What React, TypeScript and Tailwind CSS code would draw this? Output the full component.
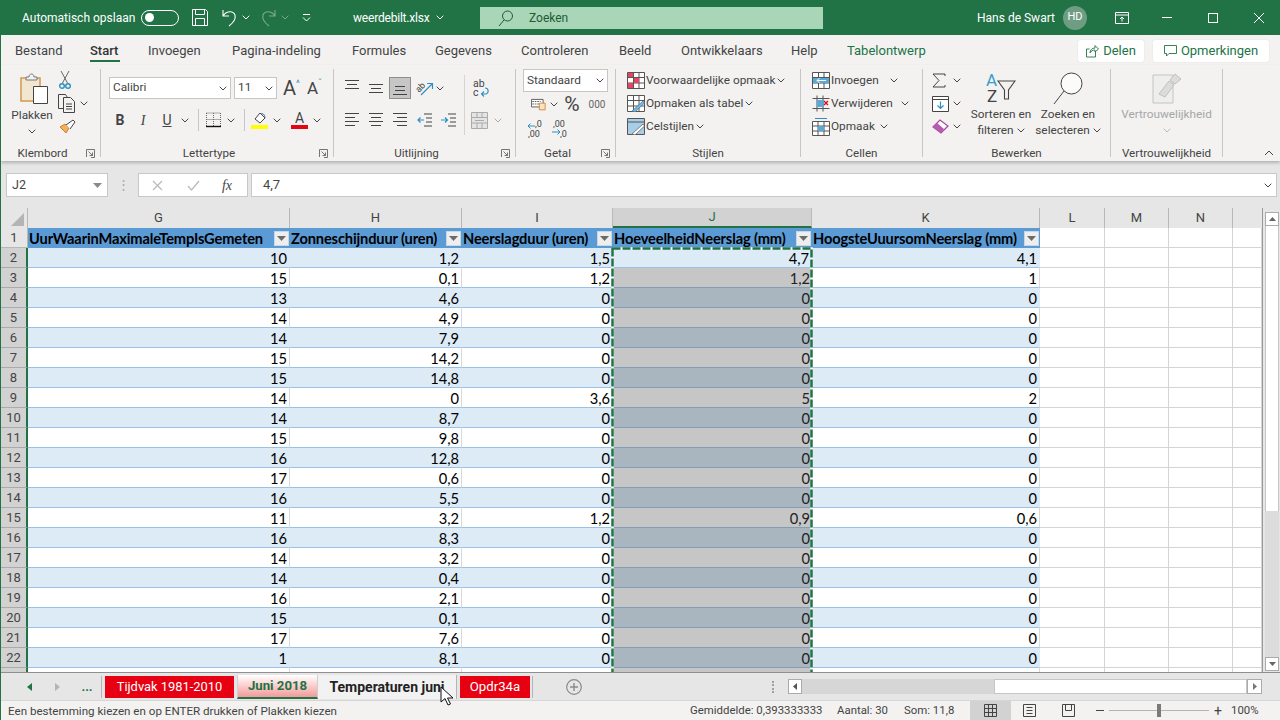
import React from "react";

const Chev = ({ c = "#444", className = "" }: { c?: string; className?: string }) => (
  <svg width="8" height="5" viewBox="0 0 8 5" className={"shrink-0 " + className}><path d="M.7.7 4 4 7.3.7" fill="none" stroke={c} strokeWidth="1" /></svg>
);
const Launcher = () => (
  <svg width="9" height="9" viewBox="0 0 9 9" className="shrink-0"><path d="M.5 8V.5h8V8.5H5M2.5 2.5l4 4M3.5 6.5h3v-3" fill="none" stroke="#666" strokeWidth=".9" /></svg>
);
const Lines = ({ kind }: { kind: string }) => {
  const map: Record<string, string> = {
    top: "M1 1.500h14M3 5.500h10M1 9.500h14",
    mid: "M1 5.500h14M3 9.500h10M1 13.500h14",
    bot: "M3 7.500h10M3 11.500h10M1 15.500h14",
    left: "M1 2.500h14M1 6.500h10M1 10.500h14M1 14.500h10",
    center: "M1 2.500h14M3 6.500h10M1 10.500h14M3 14.500h10",
    right: "M1 2.500h14M5 6.500h10M1 10.500h14M5 14.500h10",
  };
  return <svg width="16" height="18" viewBox="0 0 16 18"><path d={map[kind]} stroke="#444" strokeWidth="1.1" fill="none" /></svg>;
};
const Indent = ({ flip }: { flip?: boolean }) => (
  <svg width="16" height="16" viewBox="0 0 16 16"><path d="M7 2h8M9 6h6M9 10h6M7 14h8" stroke="#444" fill="none" />{flip ? <path d="M0 8h6M4 5.500 6.500 8 4 10.500" stroke="#2e8fc0" strokeWidth="1.2" fill="none" /> : <path d="M1 8h6M3.500 5.500 1 8l2.500 2.500" stroke="#2e8fc0" strokeWidth="1.2" fill="none" />}</svg>
);
const TableIcon = ({ children }: { children?: React.ReactNode }) => (
  <svg width="18" height="17" viewBox="0 0 18 17" className="shrink-0"><path d="M.5.500h17v16H.5zM6.500.5v16M12 .5v16M.5 5.500h17M.5 11h17" fill="#fff" stroke="#555" strokeWidth="1" />{children}</svg>
);

const Group = ({ w, label, launch, sep = true, children }: { w: string; label: string; launch?: boolean; sep?: boolean; children: React.ReactNode }) => (
  <>
    <div className={"flex flex-col shrink-0 h-[92px] " + w}>
      <div className="h-[76px] flex">{children}</div>
      <div className="h-[16px] flex items-center text-[11.600px] text-[#444]">
        <div className="flex-1 text-center whitespace-nowrap pt-[2px]">{label}</div>
        {launch && <div className="w-[16px] flex justify-start pl-[2px] pt-[1px]"><Launcher /></div>}
      </div>
    </div>
    {sep && <div className="w-px h-[88px] bg-[#c8c6c4] shrink-0" />}
  </>
);

const Box = ({ w, children }: { w: string; children?: React.ReactNode }) => (
  <div className={"flex items-center justify-center shrink-0 h-full " + w}>{children}</div>
);

const colsClass = "grid grid-cols-[27px_262px_172px_151px_199px_228px_65px_64px_64px_29px]";

const G = [10, 15, 13, 14, 14, 15, 15, 14, 14, 15, 16, 17, 16, 11, 16, 14, 14, 16, 15, 17, 1];
const H = ["1,2", "0,1", "4,6", "4,9", "7,9", "14,2", "14,8", "0", "8,7", "9,8", "12,8", "0,6", "5,5", "3,2", "8,3", "3,2", "0,4", "2,1", "0,1", "7,6", "8,1"];
const I: Record<number, string> = { 0: "1,5", 1: "1,2", 7: "3,6", 13: "1,2" };
const J: Record<number, string> = { 0: "4,7", 1: "1,2", 7: "5", 13: "0,9" };
const K: Record<number, string> = { 0: "4,1", 1: "1", 7: "2", 13: "0,6" };

const Filter = () => (
  <div className="w-[15px] h-[15px] bg-[#eeeeee] border border-[#c9d6e4] flex items-center justify-center shrink-0">
    <svg width="9" height="5" viewBox="0 0 9 5"><path d="M0 0h9L4.500 5z" fill="#6b6b6b" /></svg>
  </div>
);

const HeadCell = ({ t }: { t: string }) => (
  <div className="bg-[#5b9bd5] h-[20px] flex items-center justify-between pl-[1px] pr-[1px] text-[14.67px] font-bold text-black overflow-hidden whitespace-nowrap tracking-[-0.15px]">
    <span className="pt-[1px]">{t}</span><Filter />
  </div>
);

const Cell = ({ t, blue }: { t?: string | number; blue: boolean }) => (
  <div className={"h-[20px] flex items-center justify-end pr-[2px] pt-[2px] text-[14.67px] text-black border-b border-[#9bc2e6] border-r " + (blue ? "bg-[#ddebf7] border-r-[#ddebf7]" : "bg-white border-r-[#d9d9d9]")}>{t}</div>
);
const Empty = () => <div className="h-[20px] bg-white border-b border-r border-[#d4d4d4]" />;

const ColHead = ({ t, sel }: { t: string; sel?: boolean }) => (
  <div className={"h-[20px] flex items-center justify-center text-[13px] text-[#444] border-r border-[#b8b8b8] " + (sel ? "bg-[#d2d2d2] border-b-2 border-b-[#217346] text-[#217346]" : "bg-[#e6e6e6]")}>{t}</div>
);

export default function App() {
  return (
    <div className="w-[1280px] h-[720px] flex flex-col overflow-hidden border-l border-[#217346] bg-[#e6e6e6] relative font-['Roboto',sans-serif] text-[#444]">
      {/* Title bar */}
      <div className="h-[35px] bg-[#217346] flex items-center text-white text-[12px] shrink-0 whitespace-nowrap">
        <span className="ml-[21px] w-[119px] pt-[1px]">Automatisch opslaan</span>
        <div className="w-[38px] h-[16px] rounded-full border border-white flex items-center pl-[3px]"><div className="w-[9px] h-[9px] rounded-full bg-white" /></div>
        <div className="ml-[13px] w-[16px] h-[17px]">
          <svg width="16" height="17" viewBox="0 0 16 17"><path d="M.5.500h13l2 2v14H.5zM3.500.5v5h9v-5M3.500 16.500v-7h9v7" fill="none" stroke="#fff" /></svg>
        </div>
        <div className="ml-[14px] w-[15px]">
          <svg width="15" height="20" viewBox="0 0 15 20"><path d="M1 2v6h6M1 8c3-5 10-6 12-1 1 4-2 8-6 11" fill="none" stroke="#fff" strokeWidth="1.1" /></svg>
        </div>
        <Chev c="#fff" className="ml-[5px]" />
        <div className="ml-[11px] w-[15px] opacity-40">
          <svg width="15" height="20" viewBox="0 0 15 20"><path d="M14 2v6H8M14 8C11 3 4 2 2 7c-1 4 2 8 6 11" fill="none" stroke="#fff" strokeWidth="1.1" /></svg>
        </div>
        <Chev c="#fff" className="ml-[5px] opacity-40" />
        <div className="ml-[13px] w-[9px]">
          <svg width="9" height="9" viewBox="0 0 9 9"><path d="M1 1.500h7M1 4.500 4.500 8 8 4.500" fill="none" stroke="#fff" /></svg>
        </div>
        <span className="ml-[42px] w-[79px] pt-[1px] tracking-[-0.2px]">weerdebilt.xlsx</span>
        <Chev c="#fff" className="ml-[4px]" />
        <div className="ml-[36px] w-[343px] h-[22px] bg-[#a9d6b7] flex items-center text-[#1f5c36]">
          <svg width="18" height="18" viewBox="0 0 18 18" className="ml-[17px]"><circle cx="10.500" cy="7" r="5" fill="none" stroke="#1f5c36" /><path d="M7 11 2 17" stroke="#1f5c36" /></svg>
          <span className="ml-[14px] pt-[1px]">Zoeken</span>
        </div>
        <span className="ml-[154px] w-[74px] pt-[1px]">Hans de Swart</span>
        <div className="ml-[12px] w-[24px] h-[24px] rounded-full bg-[#6f9d84] flex items-center justify-center text-[11px]">HD</div>
        <svg width="14" height="12" viewBox="0 0 14 12" className="ml-[28px]"><path d="M.5.500h13v11H.5zM.5 3h13M7 9.500V5M5 7l2-2 2 2" fill="none" stroke="#fff" /></svg>
        <div className="ml-[33px] w-[10px] h-px bg-white" />
        <div className="ml-[36px] w-[10px] h-[10px] border border-white" />
        <svg width="10" height="10" viewBox="0 0 10 10" className="ml-[36px]"><path d="M0 0l10 10M10 0 0 10" stroke="#fff" /></svg>
      </div>

      {/* Tabs */}
      <div className="h-[30px] pt-[1px] bg-[#f3f2f1] flex items-center shrink-0 text-[13px] text-[#444] whitespace-nowrap">
        <div className="ml-[14px] w-[75px]">Bestand</div>
        <div className="w-[58px] h-full flex items-center relative font-medium text-[#333]">Start<div className="absolute left-0 top-[24px] w-[30px] h-[2px] bg-[#217346]" /></div>
        <div className="w-[84px]">Invoegen</div>
        <div className="w-[120px]">Pagina-indeling</div>
        <div className="w-[83px]">Formules</div>
        <div className="w-[86px]">Gegevens</div>
        <div className="w-[98px]">Controleren</div>
        <div className="w-[62px]">Beeld</div>
        <div className="w-[110px]">Ontwikkelaars</div>
        <div className="w-[56px]">Help</div>
        <div className="w-[231px] text-[#217346]">Tabelontwerp</div>
        <div className="w-[66px] h-[22px] bg-white rounded-[2px] shadow-[0_0_1px_rgba(0,0,0,.2)] flex items-center justify-center gap-[4px] text-[#217346]">
          <svg width="13" height="14" viewBox="0 0 13 14"><path d="M9.500 7v6H.5V5h3M4 9c0-3 2-5 5-5V1.500L12.500 5 9 8V6C7 6 5 7 4 9z" fill="none" stroke="#217346" strokeWidth=".9" /></svg>Delen
        </div>
        <div className="ml-[9px] w-[116px] h-[22px] bg-white rounded-[2px] shadow-[0_0_1px_rgba(0,0,0,.2)] flex items-center justify-center gap-[4px] text-[#217346]">
          <svg width="13" height="12" viewBox="0 0 13 12"><path d="M.5.500h12v8H5L2.500 11V8.500h-2z" fill="none" stroke="#217346" strokeWidth=".9" /></svg>Opmerkingen
        </div>
      </div>

      {/* Ribbon */}
      <div className="h-[96px] pt-[4px] bg-[#f3f2f1] flex shrink-0 relative z-10 shadow-[0_2px_3px_rgba(0,0,0,.22)] text-[11.800px] text-[#444] whitespace-nowrap">
        <Group w="w-[99px]" label="Klembord" launch>
          <div className="w-[57px] pl-[5px] flex flex-col items-center">
            <svg width="30" height="31" viewBox="0 0 30 31" className="mt-[4px] ml-[5px]">
              <path d="M1 5h19v23H1z" fill="#f3e6d0" stroke="#cf9a4e" strokeWidth="1.500" />
              <path d="M6 7V4h3c0-4 5-4 5 0h3v3z" fill="#f3f2f1" stroke="#777" />
              <path d="M13.500 13.500h14v17h-14z" fill="#fff" stroke="#444" />
            </svg>
            <div className="mt-[3px] h-[17px] leading-[17px]">Plakken</div>
            <Chev className="mt-[5px]" />
          </div>
          <div className="flex flex-col">
            <div className="h-[23px] flex items-center pl-[1px]">
              <svg width="12" height="19" viewBox="0 0 12 19"><path d="M2 0l6.500 12M10 0 3.500 12" stroke="#666" fill="none" /><circle cx="3" cy="15" r="2.300" fill="none" stroke="#2e8fc0" strokeWidth="1.400" /><circle cx="9" cy="15" r="2.300" fill="none" stroke="#2e8fc0" strokeWidth="1.400" /></svg>
            </div>
            <div className="h-[23px] flex items-center gap-[4px]">
              <svg width="18" height="19" viewBox="0 0 18 19"><path d="M6 14.500H.5V.5h7l2 3" fill="none" stroke="#444" /><path d="M5.500 3.500h7l4 4v11h-11zM8 10h6M8 12.500h6M8 15h6" fill="#f3f2f1" stroke="#444" /></svg>
              <Chev />
            </div>
            <div className="h-[23px] flex items-center pl-[1px]">
              <svg width="17" height="15" viewBox="0 0 17 15"><path d="M1 8l6 6 3-5-4-4z" fill="#f0b060" stroke="#d1812c" /><path d="M7 6l7-5 2 2-5 7" fill="#fff" stroke="#444" /></svg>
            </div>
          </div>
        </Group>

        <Group w="w-[232px]" label="Lettertype" launch>
          <div className="pl-[8px] pt-[8px] flex flex-col gap-[10px]">
            <div className="h-[22px] flex items-center">
              <div className="w-[122px] h-[22px] bg-white border border-[#c8c6c4] flex items-center justify-between pl-[3px] pr-[3px]">Calibri<Chev /></div>
              <div className="ml-[3px] w-[43px] h-[22px] bg-white border border-[#c8c6c4] flex items-center justify-between pl-[3px] pr-[3px]">11<Chev /></div>
              <div className="ml-[6px] w-[24px] flex items-start"><span className="text-[20px] leading-[22px] text-[#444]">A</span><span className="text-[9px] leading-[12px] text-[#2e8fc0]">^</span></div>
              <div className="ml-[0px] w-[22px] flex items-start"><span className="text-[17px] leading-[22px] text-[#444]">A</span><span className="text-[9px] leading-[12px] text-[#2e8fc0]">ˇ</span></div>
            </div>
            <div className="h-[22px] flex items-center">
              <Box w="w-[22px]"><span className="font-bold text-[14px]">B</span></Box>
              <Box w="w-[24px]"><span className="italic text-[14px] font-['Liberation_Serif',serif]">I</span></Box>
              <Box w="w-[24px]"><span className="underline text-[14px]">U</span></Box>
              <Box w="w-[12px]"><Chev /></Box>
              <Box w="w-[14px]"><div className="w-px h-[22px] bg-[#c8c6c4]" /></Box>
              <Box w="w-[16px]"><svg width="15" height="16" viewBox="0 0 15 16"><path d="M.5 1h14M.5 1v13M14.500 1v13M7.500 1v13M.5 7.500h14" fill="none" stroke="#666" strokeDasharray="1 1" /><path d="M0 14.500h15" stroke="#111" strokeWidth="1.400" /></svg></Box>
              <Box w="w-[20px]"><Chev /></Box>
              <Box w="w-[6px]"><div className="w-px h-[22px] bg-[#c8c6c4]" /></Box>
              <Box w="w-[24px]"><svg width="17" height="18" viewBox="0 0 17 18"><path d="M4 8l5-6 5 5-5 5z" fill="#fff" stroke="#444" /><path d="M10 3c3-1 4 2 4 4" fill="none" stroke="#2e6fa0" /><path d="M0 14h17v4H0z" fill="#ffff00" /></svg></Box>
              <Box w="w-[12px]"><Chev /></Box>
              <Box w="w-[32px]"><svg width="17" height="18" viewBox="0 0 17 18"><text x="8.500" y="12" fontSize="14" textAnchor="middle" fill="#444" fontFamily="Roboto">A</text><path d="M0 14h17v4H0z" fill="#e30613" /></svg></Box>
              <Box w="w-[4px]"><Chev /></Box>
            </div>
          </div>
        </Group>

        <Group w="w-[181px]" label="Uitlijning" launch>
          <div className="pl-[6px] pt-[8px] w-[130px] flex flex-col gap-[10px]">
            <div className="h-[22px] flex items-center">
              <Box w="w-[24px]"><Lines kind="top" /></Box>
              <Box w="w-[24px]"><Lines kind="mid" /></Box>
              <Box w="w-[24px]"><div className="w-[22px] h-[22px] bg-[#c6c6c6] border border-[#8f8f8f] flex items-center justify-center"><Lines kind="bot" /></div></Box>
              <Box w="w-[26px]"><svg width="18" height="18" viewBox="0 0 18 18"><text x="0" y="11" fontSize="9" fill="#444" transform="rotate(-45 5 9)" fontFamily="Roboto">ab</text><path d="M5 16 16 5M11 4.500h5.500V10" fill="none" stroke="#2e8fc0" strokeWidth="1.200" /></svg></Box>
              <Box w="w-[4px]"><Chev /></Box>
            </div>
            <div className="h-[22px] flex items-center">
              <Box w="w-[24px]"><Lines kind="left" /></Box>
              <Box w="w-[24px]"><Lines kind="center" /></Box>
              <Box w="w-[24px]"><Lines kind="right" /></Box>
              <Box w="w-[26px]"><Indent /></Box>
              <Box w="w-[22px]"><Indent flip /></Box>
            </div>
          </div>
          <div className="w-px h-[60px] mt-[6px] bg-[#d6d4d2]" />
          <div className="pt-[8px] flex flex-col gap-[10px]">
            <div className="h-[22px] flex items-center pl-[6px]">
              <svg width="18" height="22" viewBox="0 0 18 22"><text x="2" y="10" fontSize="10.500" fill="#444" fontFamily="Roboto">ab</text><text x="2" y="19" fontSize="10.500" fill="#444" fontFamily="Roboto">c</text><path d="M11 17h4c3-1 3-6-1-6M13 14.500 10.500 17l2.500 2.500" fill="none" stroke="#2e8fc0" strokeWidth="1.100" /></svg>
            </div>
            <div className="h-[22px] flex items-center gap-[6px] pl-[6px]">
              <svg width="17" height="17" viewBox="0 0 17 17"><path d="M.5.500h16v16H.5zM.5 5.500h16M.5 11h16M6 .5v5M11 .5v5M6 11v5.500M11 11v5.500M4 8.500h9" fill="#e4e4e4" stroke="#aaa" /></svg>
              <Chev c="#aaa" />
            </div>
          </div>
        </Group>

        <Group w="w-[99px]" label="Getal" launch>
          <div className="pl-[7px] flex flex-col">
            <div className="w-[85px] h-[23px] bg-white border border-[#c8c6c4] flex items-center justify-between pl-[3px] pr-[3px]">Standaard<Chev /></div>
            <div className="h-[24px] flex items-center">
              <Box w="w-[23px]">
                <svg width="18" height="16" viewBox="0 0 18 16" className="ml-[8px]"><path d="M.5 2.500h14v9H.5z" fill="#fff" stroke="#444" /><path d="M1.500 5h10M1.500 8h10" stroke="#444" strokeDasharray="2 1" /><path d="M10 7h7v8h-7z" fill="#f9e3c0" stroke="#d1812c" /></svg>
              </Box>
              <Box w="w-[15px]"><Chev /></Box>
              <Box w="w-[22px]"><span className="text-[21px] leading-[20px]">%</span></Box>
              <Box w="w-[28px]"><span className="text-[10px] text-[#666]">000</span></Box>
            </div>
            <div className="h-[23px] flex items-center">
              <Box w="w-[25px]"><svg width="18" height="20" viewBox="0 0 18 20"><text x="8" y="9" fontSize="9" fill="#444" fontFamily="Roboto">,0</text><text x="1" y="18.500" fontSize="9" fill="#444" fontFamily="Roboto">,00</text><path d="M1 8h7M3.500 5.500 1 8l2.500 2.500" fill="none" stroke="#2e8fc0" /></svg></Box>
              <Box w="w-[24px]"><svg width="18" height="20" viewBox="0 0 18 20"><text x="2" y="9" fontSize="9" fill="#444" fontFamily="Roboto">,00</text><text x="9" y="18.500" fontSize="9" fill="#444" fontFamily="Roboto">,0</text><path d="M1 14h8M6.500 11.500 9 14l-2.500 2.500" fill="none" stroke="#2e8fc0" /></svg></Box>
            </div>
          </div>
        </Group>

        <Group w="w-[184px]" label="Stijlen">
          <div className="pl-[11px] flex flex-col">
            <div className="h-[23px] flex items-center">
              <TableIcon><path d="M1 1h5v4H1zM7 6h5v5H7zM1 11h5v5H1z" fill="#e8445f" /></TableIcon>
              <span className="ml-[1px]">Voorwaardelijke opmaak</span><Chev className="ml-[2px]" />
            </div>
            <div className="h-[23px] flex items-center">
              <TableIcon><path d="M5 16 16 6l1.500 2L8 17z" fill="#7fb5d8" stroke="#3a7ca8" strokeWidth=".7" /></TableIcon>
              <span className="ml-[1px]">Opmaken als tabel</span><Chev className="ml-[2px]" />
            </div>
            <div className="h-[23px] flex items-center">
              <svg width="18" height="17" viewBox="0 0 18 17" className="shrink-0"><path d="M.5.500h17v16H.5z" fill="#a8cde6" stroke="#555" /><path d="M.5 4h17" stroke="#555" /><path d="M5 16 16 6l1.500 2L8 17z" fill="#fff" stroke="#555" strokeWidth=".7" /></svg>
              <span className="ml-[1px]">Celstijlen</span><Chev className="ml-[2px]" />
            </div>
          </div>
        </Group>

        <Group w="w-[121px]" label="Cellen">
          <div className="pl-[11px] flex flex-col">
            <div className="h-[23px] flex items-center">
              <TableIcon><path d="M1 6h16v5H1z" fill="#5aa9d6" /><path d="M14 8.500H5M7.500 6 5 8.500 7.500 11" stroke="#fff" fill="none" /></TableIcon>
              <span className="ml-[1px] w-[51px]">Invoegen</span><Chev className="ml-[8px]" />
            </div>
            <div className="h-[23px] flex items-center">
              <svg width="18" height="17" viewBox="0 0 18 17" className="shrink-0"><path d="M.5 3.500h17M.5 13.500h17M5 .5v16M11 .5v16" fill="none" stroke="#555" /><path d="M5 5h7v7H5z" fill="#5aa9d6" /><path d="M12 6l4 4M16 6l-4 4" stroke="#e30613" strokeWidth="1.300" /></svg>
              <span className="ml-[1px] w-[62px]">Verwijderen</span><Chev className="ml-[8px]" />
            </div>
            <div className="h-[23px] flex items-center">
              <svg width="18" height="19" viewBox="0 0 18 19" className="shrink-0"><path d="M.5 4.500h17v14H.5zM.5 9h17M.5 14h17M6 4.500v14M12 4.500v14" fill="#fff" stroke="#555" /><path d="M6 9h6v5H6z" fill="#5aa9d6" /><path d="M3 1.500h12" stroke="#2e8fc0" /></svg>
              <span className="ml-[1px]">Opmaak</span><Chev className="ml-[5px]" />
            </div>
          </div>
        </Group>

        <Group w="w-[187px]" label="Bewerken">
          <div className="w-[47px] pl-[9px] flex flex-col">
            <div className="h-[23px] flex items-center gap-[6px]">
              <svg width="14" height="15" viewBox="0 0 14 15"><path d="M13 3V1H1l6 6.500L1 14h12v-2" fill="none" stroke="#444" /></svg>
              <Chev c="#444" className="ml-[1px]" />
            </div>
            <div className="h-[23px] flex items-center gap-[4px]">
              <svg width="17" height="16" viewBox="0 0 17 16"><path d="M.5.500h16v15H.5zM.5 3.500h16" fill="#fff" stroke="#444" /><path d="M8.500 5.500v7M5.500 9.500l3 3 3-3" fill="none" stroke="#2e8fc0" strokeWidth="1.200" /></svg>
              <Chev />
            </div>
            <div className="h-[23px] flex items-center gap-[4px]">
              <svg width="17" height="15" viewBox="0 0 17 15"><path d="M1 8l7-7 8 6-7 7z" fill="#fff" stroke="#a6459c" strokeWidth="1.200" /><path d="M1 8l4-4 7 6-3 4z" fill="#b85bb0" /></svg>
              <Chev />
            </div>
          </div>
          <div className="w-[62px] pt-[3px] flex flex-col items-center">
            <div className="h-[34px] flex items-start">
              <svg width="30" height="32" viewBox="0 0 30 32"><text x="0" y="14" fontSize="17" fill="#3a9dc9" fontFamily="Roboto">A</text><text x="1" y="30" fontSize="17" fill="#444" fontFamily="Roboto">Z</text><path d="M12 9h17l-6.500 9v9h-4v-9z" fill="none" stroke="#444" strokeWidth="1.100" /></svg>
            </div>
            <div className="h-[16px] leading-[16px]">Sorteren en</div>
            <div className="h-[16px] leading-[16px] flex items-center gap-[3px]">filteren<Chev /></div>
          </div>
          <div className="w-[72px] pt-[3px] flex flex-col items-center">
            <div className="h-[34px] flex items-start">
              <svg width="30" height="34" viewBox="0 0 30 34"><circle cx="18.500" cy="11.500" r="10.500" fill="#fbfbfa" stroke="#444" /><path d="M11 19 1 32" stroke="#444" /></svg>
            </div>
            <div className="h-[16px] leading-[16px]">Zoeken en</div>
            <div className="h-[16px] leading-[16px] flex items-center gap-[3px]">selecteren<Chev /></div>
          </div>
        </Group>

        <Group w="w-[111px]" label="Vertrouwelijkheid">
          <div className="w-full pt-[3px] flex flex-col items-center">
            <div className="h-[34px] flex items-start">
              <svg width="30" height="32" viewBox="0 0 30 32"><path d="M1 3h20v28H1z" fill="#eeeeed" stroke="#c4c4c4" /><path d="M7 22 17 9l5 4-9 12zM18 8l5-6 6 5-6 5z" fill="#dcdcdc" stroke="#c0c0c0" /></svg>
            </div>
            <div className="h-[16px] leading-[16px] text-[#a6a6a6]">Vertrouwelijkheid</div>
            <div className="h-[16px] flex items-center"><Chev c="#bbb" /></div>
          </div>
        </Group>

        <div className="flex-1 h-[92px] flex items-end justify-end pr-[6px] pb-[5px]">
          <svg width="10" height="6" viewBox="0 0 10 6"><path d="M1 5l4-4 4 4" fill="none" stroke="#444" /></svg>
        </div>
      </div>

      {/* Formula bar */}
      <div className="h-[47px] pt-[12px] flex shrink-0 bg-[#e6e6e6]">
        <div className="ml-[5px] w-[102px] h-[24px] bg-white border border-[#c8c8c8] flex items-center justify-between pl-[5px] pr-[5px] text-[12.5px]">J2
          <svg width="9" height="5" viewBox="0 0 9 5"><path d="M0 0h9L4.500 5z" fill="#8a8a8a" /></svg>
        </div>
        <div className="w-[30px] h-[24px] flex items-center justify-center text-[#a8a8a8] text-[13px]">⋮</div>
        <div className="w-[110px] h-[24px] bg-white border border-[#c8c8c8] flex items-center">
          <Box w="w-[36px]"><svg width="11" height="11" viewBox="0 0 11 11"><path d="M1 1l9 9M10 1l-9 9" stroke="#bbb" strokeWidth="1.300" /></svg></Box>
          <Box w="w-[36px]"><svg width="13" height="11" viewBox="0 0 13 11"><path d="M1 6l3.500 4L12 1" fill="none" stroke="#bbb" strokeWidth="1.300" /></svg></Box>
          <Box w="w-[32px]"><span className="italic text-[14px] font-['Liberation_Serif',serif] text-[#444]">fx</span></Box>
        </div>
        <div className="ml-[3px] w-[1026px] h-[24px] bg-white border border-[#c8c8c8] flex items-center justify-between pl-[11px] pr-[4px] text-[13px]">4,7<Chev /></div>
      </div>

      {/* Sheet */}
      <div className="h-[464px] flex shrink-0">
        <div className="w-[1262px] h-[464px] relative overflow-hidden border-r border-[#9a9a9a] bg-white font-['Lato',sans-serif]">
          <div className={colsClass + " font-['Roboto',sans-serif]"}>
            <div className="h-[20px] bg-[#e6e6e6] border-r border-[#b8b8b8] flex items-end justify-end pr-[3px] pb-[2px]">
              <svg width="13" height="13" viewBox="0 0 13 13"><path d="M13 0v13H0z" fill="#b4b4b4" /></svg>
            </div>
            <ColHead t="G" /><ColHead t="H" /><ColHead t="I" /><ColHead t="J" sel /><ColHead t="K" /><ColHead t="L" /><ColHead t="M" /><ColHead t="N" />
            <div className="h-[20px] bg-[#e6e6e6]" />
          </div>
          <div className={colsClass}>
            <div className="h-[20px] bg-[#e6e6e6] border-r border-b border-[#b8b8b8] flex items-center justify-center text-[13px] text-[#444] font-['Roboto',sans-serif]">1</div>
            <HeadCell t="UurWaarinMaximaleTempIsGemeten" />
            <HeadCell t="Zonneschijnduur (uren)" />
            <HeadCell t="Neerslagduur (uren)" />
            <HeadCell t="HoeveelheidNeerslag (mm)" />
            <HeadCell t="HoogsteUuursomNeerslag (mm)" />
            <Empty /><Empty /><Empty /><Empty />
          </div>
          {G.map((g, i) => {
            const blue = i % 2 === 0;
            return (
              <div key={i} className={colsClass}>
                <div className="h-[20px] bg-[#d2d2d2] border-r-2 border-r-[#217346] border-b border-b-[#aaaaaa] flex items-center justify-center pt-[1px] text-[13px] text-[#444] font-['Roboto',sans-serif]">{i + 2}</div>
                <Cell t={g} blue={blue} />
                <Cell t={H[i]} blue={blue} />
                <Cell t={I[i] ?? "0"} blue={blue} />
                {i === 0 ? (
                  <Cell t={J[i]} blue />
                ) : (
                  <div className={"h-[20px] flex items-center justify-end pr-[2px] pt-[2px] text-[14.67px] text-[#222] border-b " + (blue ? "bg-[#a9b5bf] border-[#869db5]" : "bg-[#c6c6c6] border-[#869db5]")}>{J[i] ?? "0"}</div>
                )}
                <Cell t={K[i] ?? "0"} blue={blue} />
                <Empty /><Empty /><Empty /><Empty />
              </div>
            );
          })}
          <div className={colsClass}>
            <div className="h-[20px] bg-[#d2d2d2] border-r-2 border-r-[#217346]" />
            <Cell blue={false} /><Cell blue={false} /><Cell blue={false} />
            <div className="h-[20px] bg-[#c6c6c6]" />
            <Cell blue={false} />
            <Empty /><Empty /><Empty /><Empty />
          </div>
          <svg width="204" height="430" viewBox="0 0 204 430" className="absolute left-[610px] top-[39px] pointer-events-none">
            <rect x="1.500" y="1.500" width="199" height="440" fill="none" stroke="#fff" strokeWidth="2.500" />
            <rect x="1.500" y="1.500" width="199" height="440" fill="none" stroke="#217346" strokeWidth="2.500" strokeDasharray="8 2" />
          </svg>
        </div>
        <div className="flex-1 pt-[4px] pl-[2px] pr-[1px] flex flex-col bg-[#e6e6e6]">
          <div className="h-[14px] bg-white border border-[#ababab] flex items-center justify-center">
            <svg width="7" height="4" viewBox="0 0 7 4"><path d="M3.500 0 7 4H0z" fill="#666" /></svg>
          </div>
          <div className="h-[285px] bg-white border-x border-[#c6c6c6]" />
          <div className="flex-1 bg-[#dcdcdc]" />
          <div className="h-[14px] bg-white border border-[#ababab] flex items-center justify-center mb-[1px]">
            <svg width="7" height="4" viewBox="0 0 7 4"><path d="M0 0h7L3.500 4z" fill="#666" /></svg>
          </div>
        </div>
      </div>

      {/* Sheet tabs */}
      <div className="h-[28px] flex items-center shrink-0 border-t border-[#8f8f8f] bg-[#e6e6e6] text-[12.900px] whitespace-nowrap">
        <div className="w-[72px] pl-[13px] h-full flex items-center justify-center shrink-0">
          <svg width="5" height="8" viewBox="0 0 5 8"><path d="M5 0v8L0 4z" fill="#217346" /></svg>
          <svg width="5" height="8" viewBox="0 0 5 8" className="ml-[23px]"><path d="M0 0v8l5-4z" fill="#b4b4b4" /></svg>
        </div>
        <Box w="w-[28px]"><span className="text-[#217346] font-bold">...</span></Box>
        <div className="w-px h-[22px] bg-[#b4b4b4]" />
        <div className="ml-[3px] w-[129px] h-[22px] bg-[#e60012] text-white flex items-center justify-center">Tijdvak 1981-2010</div>
        <div className="ml-[3px] w-[81px] h-[24px] self-start mt-[2px] bg-gradient-to-b from-white to-[#f09a9a] border-b-2 border-[#217346] border-x border-x-[#cfcfcf] text-[#217346] text-[13.200px] font-bold flex items-center justify-center">Juni 2018</div>
        <div className="w-[139px] h-[24px] self-start mt-[2px] bg-[#f2f2f2] border-r border-[#b4b4b4] text-[#222] text-[14px] font-bold flex items-center justify-center">Temperaturen juni</div>
        <div className="ml-[3px] w-[70px] h-[22px] bg-[#e60012] text-white text-[13.200px] flex items-center justify-center">Opdr34a</div>
        <div className="ml-[2px] w-px h-[22px] bg-[#b4b4b4]" />
        <svg width="16" height="16" viewBox="0 0 16 16" className="ml-[33px]"><circle cx="8" cy="8" r="7.300" fill="none" stroke="#8a8a8a" strokeWidth="1.200" /><path d="M8 4v8M4 8h8" stroke="#8a8a8a" strokeWidth="1.400" /></svg>
        <div className="ml-[190px] w-[2px] h-[12px] border-l-2 border-dotted border-[#a0a0a0]" />
        <div className="ml-[14px] w-[474px] h-[15px] flex bg-[#d6d6d6]">
          <div className="w-[14px] bg-white border border-[#ababab] flex items-center justify-center"><svg width="4" height="7" viewBox="0 0 4 7"><path d="M4 0v7L0 3.500z" fill="#555" /></svg></div>
          <div className="w-[192px]" />
          <div className="flex-1 bg-white border border-[#c6c6c6]" />
          <div className="w-[15px] bg-white border border-[#ababab] flex items-center justify-center"><svg width="4" height="7" viewBox="0 0 4 7"><path d="M0 0v7l4-3.500z" fill="#777" /></svg></div>
        </div>
      </div>

      {/* Status bar */}
      <div className="h-[20px] flex items-center shrink-0 bg-[#f3f2f1] border-t border-[#d6d6d6] text-[11.400px] text-[#444] whitespace-nowrap">
        <span className="ml-[7px] w-[682px] pt-[2px] text-[11.600px]">Een bestemming kiezen en op ENTER drukken of Plakken kiezen</span>
        <span className="w-[147px] pt-[1px]">Gemiddelde: 0,393333333</span>
        <span className="w-[67px] pt-[1px]">Aantal: 30</span>
        <span className="w-[66px] pt-[1px]">Som: 11,8</span>
        <div className="w-[41px] h-[19px] bg-[#d2d2d2] flex items-center justify-center">
          <svg width="13" height="13" viewBox="0 0 13 13"><path d="M.5.500h12v12H.5zM.5 4.500h12M.5 8.500h12M4.500.5v12M8.500.5v12" fill="none" stroke="#444" /></svg>
        </div>
        <div className="ml-[12px] w-[13px] flex"><svg width="13" height="13" viewBox="0 0 13 13"><path d="M.5.500h12v12H.5zM3.500 3.500h6M3.500 6.500h6M3.500 9.500h6" fill="none" stroke="#444" /></svg></div>
        <div className="ml-[26px] w-[13px] flex"><svg width="13" height="13" viewBox="0 0 13 13"><path d="M.5.500h12v12H.5zM3.500.5v6h6v-6" fill="none" stroke="#444" /></svg></div>
        <div className="ml-[21px] w-[8px] h-px bg-[#444]" />
        <div className="ml-[5px] w-[100px] h-px bg-[#b4b4b4] flex items-center justify-center"><div className="w-[4px] h-[13px] bg-[#7a7a7a] shrink-0" /></div>
        <span className="ml-[5px] w-[9px] text-[14px] leading-[14px]">+</span>
        <span className="ml-[8px] pt-[1px]">100%</span>
      </div>

      {/* Mouse pointer */}
      <svg width="14" height="21" viewBox="0 0 14 21" className="absolute left-[439px] top-[686px]">
        <path d="M1 1v15l4-3.500L8 19l2.500-1-3-6H13z" fill="#fff" stroke="#111" strokeWidth="1" />
      </svg>
    </div>
  );
}
